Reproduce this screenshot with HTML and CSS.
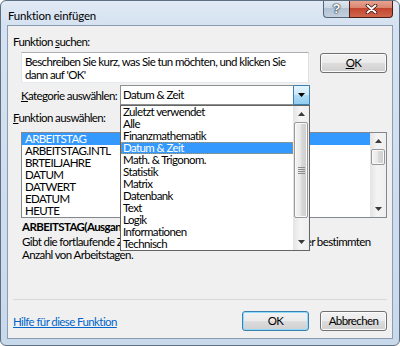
FILE: index.html
```html
<!DOCTYPE html>
<html lang="de">
<head>
<meta charset="utf-8">
<title>Funktion einfügen</title>
<link rel="stylesheet" href="styles.css">
</head>
<body>
<div class="window">
  <div class="titlebar">
    <span class="title">Funktion einfügen</span>
    <div class="caption">
      <span class="cap-btn cap-help">?</span>
      <span class="cap-btn cap-close">
        <svg width="13" height="10" viewBox="0 0 13 10"><path d="M2.5 1.5 L10.5 8.5 M10.5 1.5 L2.5 8.5" stroke="#3a1510" stroke-width="3.6" stroke-linecap="round" fill="none"/><path d="M2.5 1.5 L10.5 8.5 M10.5 1.5 L2.5 8.5" stroke="#ffffff" stroke-width="2" stroke-linecap="round" fill="none"/></svg>
      </span>
    </div>
  </div>
  <div class="client">
    <div class="label">Funktion <u>s</u>uchen:</div>
    <div class="search-row">
      <div class="textbox">Beschreiben Sie kurz, was Sie tun möchten, und klicken Sie<br>dann auf 'OK'</div>
      <button class="btn btn-go"><u>O</u>K</button>
    </div>
    <div class="cat-row">
      <span class="cat-label"><u>K</u>ategorie auswählen:</span>
      <div class="combo">
        <span class="combo-text">Datum &amp; Zeit</span>
        <span class="combo-btn"><svg width="7" height="4" viewBox="0 0 7 4"><path d="M0 0 H7 L3.5 4 Z" fill="#000"/></svg></span>
        <div class="dropdown">
          <ul class="dd-list">
            <li>Zuletzt verwendet</li>
            <li>Alle</li>
            <li>Finanzmathematik</li>
            <li class="selected focus">Datum &amp; Zeit</li>
            <li>Math. &amp; Trigonom.</li>
            <li>Statistik</li>
            <li>Matrix</li>
            <li>Datenbank</li>
            <li>Text</li>
            <li>Logik</li>
            <li>Informationen</li>
            <li>Technisch</li>
          </ul>
          <div class="vscroll">
            <span class="sb-btn"><svg width="7" height="4" viewBox="0 0 7 4"><path d="M0 4 H7 L3.5 0 Z" fill="#3a3a3a"/></svg></span>
            <span class="sb-track"><span class="sb-thumb dd-thumb"><svg width="7" height="7" viewBox="0 0 7 7"><path d="M0 0.5 H7 M0 2.5 H7 M0 4.5 H7 M0 6.5 H7" stroke="#8a8a8a" stroke-width="1"/></svg></span></span>
            <span class="sb-btn"><svg width="7" height="4" viewBox="0 0 7 4"><path d="M0 0 H7 L3.5 4 Z" fill="#3a3a3a"/></svg></span>
          </div>
        </div>
      </div>
    </div>
    <div class="label fn-label"><u>F</u>unktion auswählen:</div>
    <div class="listbox">
      <ul class="items">
        <li class="selected">ARBEITSTAG</li>
        <li>ARBEITSTAG.INTL</li>
        <li>BRTEILJAHRE</li>
        <li>DATUM</li>
        <li>DATWERT</li>
        <li>EDATUM</li>
        <li>HEUTE</li>
      </ul>
      <div class="vscroll">
        <span class="sb-btn"><svg width="7" height="4" viewBox="0 0 7 4"><path d="M0 4 H7 L3.5 0 Z" fill="#3a3a3a"/></svg></span>
        <span class="sb-track"><span class="sb-thumb fn-thumb"></span></span>
        <span class="sb-btn"><svg width="7" height="4" viewBox="0 0 7 4"><path d="M0 0 H7 L3.5 4 Z" fill="#3a3a3a"/></svg></span>
      </div>
    </div>
    <div class="sig">ARBEITSTAG(Ausgangsdatum;Tage;Freie_Tage)</div>
    <div class="desc">Gibt die fortlaufende Zahl des Datums zurück, vor oder nach einer bestimmten<br>Anzahl von Arbeitstagen.</div>
    <div class="footer">
      <a class="help-link">Hilfe für diese Funktion</a>
      <button class="btn btn-default">OK</button>
      <button class="btn">Abbrechen</button>
    </div>
  </div>
</div>
</body>
</html>
```

FILE: styles.css
```css
* { box-sizing: border-box; }
html, body { margin: 0; padding: 0; }
body {
  background: #ffffff;
  font-family: Lato, "Liberation Sans", sans-serif;
  font-size: 11.5px;
  color: #000;
}
ul { margin: 0; padding: 0; list-style: none; }

.window {
  width: 400px;
  height: 346px;
  border: 1px solid #5f6f82;
  border-radius: 6px;
  padding: 0 6px 6px 6px;
  display: flex;
  flex-direction: column;
  background: linear-gradient(to bottom, #e1eaf5 0px, #d5e2f1 24px, #c9d9ec 100%);
  overflow: hidden;
}

.titlebar {
  height: 24px;
  flex: none;
  display: flex;
  align-items: flex-start;
  padding-left: 1px;
}
.title { line-height: 15px; margin-top: 7px; white-space: nowrap; letter-spacing: -0.2px; }
.caption { margin-left: auto; margin-top: -1px; display: flex; }
.cap-btn {
  height: 18px;
  display: flex;
  align-items: center;
  justify-content: center;
  border: 1px solid #55667c;
  border-top: none;
}
.cap-help {
  width: 26px;
  border-right: none;
  border-radius: 0 0 0 4px;
  background: linear-gradient(to bottom, #e3eaf2 0%, #cdd8e4 45%, #b2c2d4 50%, #c3d0de 100%);
  color: #fff;
  font-family: "Liberation Sans", sans-serif;
  font-weight: bold;
  font-size: 13px;
  text-shadow: 0 0 1px #1e2a3a, 0 0 1px #1e2a3a, 0 0 2px #1e2a3a;
}
.cap-close {
  width: 44px;
  border-color: #4a1e17;
  border-radius: 0 0 4px 0;
  background: linear-gradient(to bottom, #e9a795 0%, #da8670 45%, #c24530 50%, #d0664d 100%);
}

.client {
  flex: 1;
  background: #f0f0f0;
  border: 1px solid #8a9cb1;
  padding: 8px 5px 7px 5px;
  display: flex;
  flex-direction: column;
  white-space: nowrap;
  letter-spacing: -0.6px;
}

.label { line-height: 15px; }

.search-row {
  display: flex;
  justify-content: space-between;
  align-items: flex-start;
  margin-top: 3px;
  padding-left: 8px;
}
.textbox {
  width: 288px;
  height: 31px;
  background: #fff;
  border: 1px solid;
  border-color: #abadb3 #dbdfe6 #e3e9ef #e2e3ea;
  padding: 2px 3px;
  line-height: 13px;
}

.btn {
  width: 67px;
  height: 20px;
  padding: 0;
  font: inherit;
  letter-spacing: inherit;
  color: #000;
  line-height: 16px;
  border: 1px solid #707070;
  border-radius: 3px;
  background: linear-gradient(to bottom, #f2f2f2 0%, #ebebeb 50%, #dddddd 51%, #cfcfcf 100%);
  box-shadow: inset 0 0 0 1px #fbfbfb;
}
.btn-go { margin-top: 1px; }
.btn-default {
  border-color: #3c7fb1;
  box-shadow: inset 0 0 0 1px #8fdbfb;
}

.cat-row {
  display: flex;
  align-items: center;
  margin-top: 2px;
  padding-left: 8px;
}
.cat-label { width: 99px; line-height: 15px; }
.combo {
  position: relative;
  width: 190px;
  height: 20px;
  border: 1px solid #8e8f8f;
  background: #fff;
  display: flex;
}
.combo-text { flex: 1; padding-left: 2px; line-height: 18px; }
.combo-btn {
  width: 17px;
  margin: -1px -1px -1px 0;
  border: 1px solid #3c7fb1;
  border-radius: 1px;
  background: linear-gradient(to bottom, #e6f5fd 0%, #c9e8f8 50%, #acdbf5 51%, #92cdee 100%);
  display: flex;
  align-items: center;
  justify-content: center;
}

.dropdown {
  position: absolute;
  left: -1px;
  top: 19px;
  width: 190px;
  height: 146px;
  border: 1px solid #646464;
  background: #fff;
  display: flex;
  z-index: 2;
}
.dd-list { flex: 1; }
.dd-list li { height: 12px; line-height: 12px; padding-left: 2px; }
.selected { background: #3399ff; color: #fff; }
.focus { outline: 1px dotted #c8913f; outline-offset: -1px; }

.vscroll {
  width: 16px;
  flex: none;
  display: flex;
  flex-direction: column;
  background: linear-gradient(to right, #e4e4e4 0%, #f4f4f4 45%, #eeeeee 100%);
}
.sb-btn {
  height: 16px;
  flex: none;
  display: flex;
  align-items: center;
  justify-content: center;
}
.sb-track { flex: 1; display: flex; flex-direction: column; padding: 0 1px; }
.sb-thumb {
  border: 1px solid #989898;
  border-radius: 2px;
  background: linear-gradient(to right, #f4f4f4 0%, #e9e9e9 45%, #d9d9d9 55%, #cdcdcd 100%);
  box-shadow: inset 0 0 0 1px #fafafa;
  display: flex;
  align-items: center;
  justify-content: center;
}
.dd-thumb { height: 96px; }
.fn-thumb { height: 16px; }

.fn-label { margin-top: 5px; }
.listbox {
  margin: 7px 0 0 8px;
  height: 86px;
  border: 1px solid #828790;
  background: #fff;
  display: flex;
}
.items { flex: 1; }
.items li { height: 12px; line-height: 12px; padding-left: 3px; }

.sig { font-weight: bold; line-height: 15px; margin-top: 1px; padding-left: 9px; }
.desc { line-height: 13px; margin-top: 1px; padding-left: 9px; }

.footer {
  margin-top: auto;
  border-top: 1px solid #d8d8d8;
  padding-top: 11px;
  display: flex;
  align-items: center;
  gap: 11px;
}
.help-link {
  margin-right: auto;
  color: #0066cc;
  text-decoration: underline;
  line-height: 15px;
  cursor: pointer;
}
```
